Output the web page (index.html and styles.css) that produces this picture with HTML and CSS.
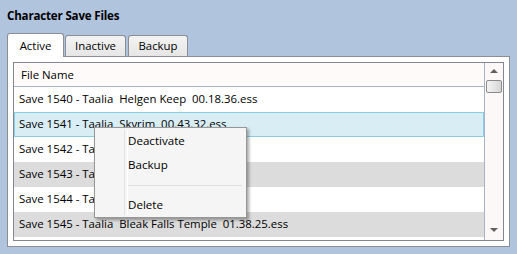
FILE: index.html
```html
<!doctype html>
<html>
<head>
<meta charset="utf-8">
<title>Character Save Files</title>
<link rel="stylesheet" href="styles.css">
</head>
<body>
<div class="frame">
	<div class="title">Character Save Files</div>
	<div class="tabs">
		<div class="tab tab-active">Active</div>
		<div class="tab tab-inactive">Inactive</div>
		<div class="tab tab-backup">Backup</div>
	</div>
	<div class="panel">
		<div class="listbox">
			<div class="list">
				<div class="head">File Name</div>
				<div class="row">Save 1540 - Taalia  Helgen Keep  00.18.36.ess</div>
				<div class="row sel">Save 1541 - Taalia  Skyrim  00.43.32.ess</div>
				<div class="row">Save 1542 - Taalia  Helgen  00.51.07.ess</div>
				<div class="row alt">Save 1543 - Taalia  Skyrim  01.02.19.ess</div>
				<div class="row">Save 1544 - Taalia  Skyrim  01.14.52.ess</div>
				<div class="row alt">Save 1545 - Taalia  Bleak Falls Temple  01.38.25.ess</div>
			</div>
			<div class="scroll">
				<span class="arrow up"></span>
				<span class="thumb"></span>
				<span class="track"></span>
				<span class="arrow down"></span>
			</div>
		</div>
	</div>
	<div class="menu">
		<div class="item">Deactivate</div>
		<div class="item">Backup</div>
		<div class="sep"></div>
		<div class="item">Delete</div>
	</div>
</div>
</body>
</html>
```
FILE: styles.css
```css
*{padding:0; margin:0; box-sizing:border-box;}
body{background:#b0c4de; font-family:"Segoe UI","Open Sans","Noto Sans",sans-serif; font-size:11.4px; color:#000; overflow:hidden;}
.frame{position:relative; width:517px; height:254px; padding:0 7px 8px 7px;}
.title{font-weight:bold; font-size:11.6px; height:33px; line-height:16px; padding-top:8px; letter-spacing:-0.2px;}
.tabs{display:flex; align-items:flex-end; height:23px; position:relative; z-index:1;}
.tab{height:21px; line-height:19px; text-align:center; border:1px solid #8c8e94; border-bottom:none; border-radius:3px 3px 0 0; background:linear-gradient(#f3f3f3,#e6e6e6);}
.tab-active{width:57px; height:24px; line-height:24px; background:#fff; margin-bottom:-1px;}
.tab-inactive{width:61px; margin-left:1px;}
.tab-backup{width:60px; margin-left:2px;}
.panel{background:#fff; border:1px solid #8c8e94; padding:5px; height:191px;}
.listbox{display:grid; grid-template-columns:1fr 19px; border:1px solid #828790; height:179px;}
.list{display:flex; flex-direction:column;}
.head{height:24px; line-height:23px; padding-left:7px; background:#fffafa; border-bottom:1px solid #a5b4c8;}
.row{height:25px; line-height:24px; padding-left:5px; white-space:pre; overflow:hidden;}
.alt{background:#dcdcdc;}
.sel{background:#d9edf4; border:1px solid #8ccde3; padding-left:4px; line-height:22px;}
.scroll{display:flex; flex-direction:column; align-items:center; background:#fdf8f8; border-left:1px solid #a5b4c8;}
.arrow{width:0; height:0; border-left:4px solid transparent; border-right:4px solid transparent;}
.up{margin-top:6px; border-bottom:4px solid #606060;}
.down{margin-bottom:8px; border-top:4px solid #606060;}
.thumb{width:16px; height:13px; margin-top:7px; border:1px solid #8a8a8a; border-radius:2px; background:linear-gradient(90deg,#f4f4f4,#d6d6d6);}
.track{flex:1;}
.menu{position:absolute; left:94px; top:127px; width:153px; height:91px; background:#f5f5f5; border:1px solid #979797; padding:2px; box-shadow:2px 2px 3px rgba(0,0,0,0.35);}
.menu::before{content:""; position:absolute; left:29px; top:2px; bottom:2px; width:2px; border-left:1px solid #e2e3e3; border-right:1px solid #fff;}
.item{height:24px; line-height:22px; padding-left:31px; font-size:11.6px;}
.sep{height:16px; margin-left:31px; margin-right:2px; border-bottom:1px solid #e0e0e0; transform:translateY(-8px);}
```
